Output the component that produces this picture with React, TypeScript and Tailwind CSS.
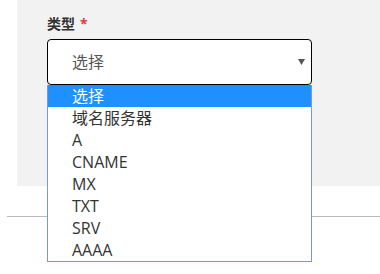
const options = ["选择", "域名服务器", "A", "CNAME", "MX", "TXT", "SRV", "AAAA"];

export default function App() {
  return (
    <div
      className="w-[380px] h-[274px] overflow-hidden bg-white text-[#333]"
      style={{ fontFamily: '"Open Sans", "Noto Sans CJK SC", sans-serif' }}
    >
      <div className="ml-[17px] h-[186px] bg-[#f2f2f2] pt-[14px] pl-[30px] pr-[68px]">
        <label className="flex items-center gap-[5px] text-[14px] font-bold leading-[20px] text-[#333]">
          类型
          <span className="text-[#e4393c] font-bold">*</span>
        </label>
        <div className="relative mt-[5px]">
          <div className="flex h-[46px] items-center justify-between rounded-[4px] border border-black bg-white pl-[24px] pr-[6px] text-[16px] text-[#555]">
            <span>选择</span>
            <svg width="7" height="6" viewBox="0 0 7 6" className="mt-[-1px]">
              <path d="M0 0h7L3.5 6z" fill="#555" />
            </svg>
          </div>
          <ul className="absolute left-0 top-full z-10 w-full border border-t-0 border-[#7b98d6] bg-white">
            {options.map((o, i) => (
              <li
                key={o}
                className={
                  "h-[22px] pl-[24px] text-[16px] leading-[22px] " +
                  (i === 0 ? "bg-[#1e90ff] text-white" : "text-[#333]")
                }
              >
                {o}
              </li>
            ))}
          </ul>
        </div>
      </div>
      <div className="mt-[30px] ml-[7px] h-px bg-[#bbb]" />
    </div>
  );
}
